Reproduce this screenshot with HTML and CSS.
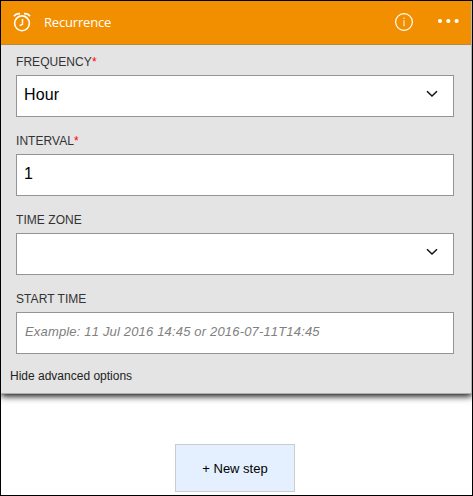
FILE: index.html
```html
<!DOCTYPE html>
<html lang="en">
<head>
<meta charset="utf-8">
<title>Recurrence</title>
<link rel="stylesheet" href="styles.css">
</head>
<body>
<main class="canvas">
  <section class="card">
    <header class="card-header">
      <svg class="clock" width="20" height="20" viewBox="0 0 20 20" fill="none" stroke="#fff">
        <circle cx="10" cy="11.3" r="7.4" stroke-width="1.6"/>
        <path d="M10.5 7v5.2l-2.8 1.4" stroke-width="1.5"/>
        <path d="M2 4.3Q4 1.4 8 1.7M18 4.3Q16 1.4 12 1.7" stroke-width="1.7"/>
      </svg>
      <h1 class="title">Recurrence</h1>
      <svg class="info" width="20" height="20" viewBox="0 0 20 20" fill="none" stroke="#fff">
        <circle cx="10" cy="10" r="8.4" stroke-width="1.2"/>
        <path d="M10 8.3v6M10 5.5v1.5" stroke-width="1.2" opacity=".8"/>
      </svg>
      <svg class="more" width="24" height="6" viewBox="0 0 24 6" fill="#fff">
        <circle cx="4" cy="3" r="2.1"/><circle cx="12.3" cy="3" r="2.1"/><circle cx="20.6" cy="3" r="2.1"/>
      </svg>
    </header>
    <div class="fields">
      <div class="field">
        <div class="label">FREQUENCY<span class="required">*</span></div>
        <div class="control">
          <span class="value">Hour</span>
          <svg class="chevron" width="12" height="8" viewBox="0 0 12 8" fill="none" stroke="#111" stroke-width="1.5"><path d="M1 1.2l5 4.8 5-4.8"/></svg>
        </div>
      </div>
      <div class="field">
        <div class="label">INTERVAL<span class="required">*</span></div>
        <div class="control"><span class="value">1</span></div>
      </div>
      <div class="field">
        <div class="label">TIME ZONE</div>
        <div class="control">
          <span class="value"></span>
          <svg class="chevron" width="12" height="8" viewBox="0 0 12 8" fill="none" stroke="#111" stroke-width="1.5"><path d="M1 1.2l5 4.8 5-4.8"/></svg>
        </div>
      </div>
      <div class="field">
        <div class="label">START TIME</div>
        <div class="control"><span class="placeholder">Example: 11 Jul 2016 14:45 or 2016-07-11T14:45</span></div>
      </div>
    </div>
    <div class="advanced">Hide advanced options</div>
  </section>
  <button class="new-step">+ New step</button>
</main>
</body>
</html>
```
FILE: styles.css
```css
* { box-sizing: border-box; }

body {
  margin: 0;
  font-family: "Liberation Sans", Arial, sans-serif;
}

.canvas {
  width: 473px;
  height: 496px;
  border: 1px solid #000;
  background: #fff;
  overflow: hidden;
  display: flex;
  flex-direction: column;
  align-items: center;
}

.card {
  width: 471px;
  height: 393px;
  background: #e4e4e4;
  border-right: 1px solid #b5b5b5;
  border-bottom: 1px solid #a9aeb0;
  box-shadow: 0 2px 7px #000;
}

.card-header {
  height: 44px;
  display: flex;
  align-items: center;
  padding: 0 11px 2px;
  background: #f28f00;
  border-bottom: 1px solid #b58a45;
  color: #fff;
}

.title {
  flex: 1;
  margin: 1px 0 0 12px;
  font: 400 13px/18px "Open Sans", "Noto Sans", sans-serif;
  letter-spacing: -0.18px;
}

.info { margin-right: 22px; }

.more { margin-bottom: 1px; }

.fields { padding: 9px 17px 0 15px; }

.field + .field { margin-top: 16px; }

.label {
  height: 16px;
  margin-bottom: 5px;
  font-size: 12px;
  line-height: 16px;
  letter-spacing: 0.06px;
  color: #333;
}

.required { color: #f00; }

.control {
  height: 42px;
  display: flex;
  align-items: center;
  justify-content: space-between;
  padding: 0 15px 3px 7px;
  border: 1px solid #949494;
  background: #fff;
}

.value {
  font-size: 16px;
  line-height: 19px;
  letter-spacing: 0.1px;
  color: #000;
}

.chevron { margin-bottom: 1px; }

.placeholder {
  padding-left: 1px;
  font-size: 13px;
  font-style: italic;
  font-kerning: none;
  letter-spacing: 0.17px;
  color: #808080;
}

.advanced {
  margin: 14px 0 0 9px;
  font-size: 12px;
  line-height: 16px;
  color: #222;
}

.new-step {
  width: 120px;
  height: 48px;
  margin: 50px 0 0 -3px;
  padding: 0;
  border: 1px solid #ccc;
  background: #e4f0ff;
  color: #000;
  font: 13px "Liberation Sans", Arial, sans-serif;
}
```
